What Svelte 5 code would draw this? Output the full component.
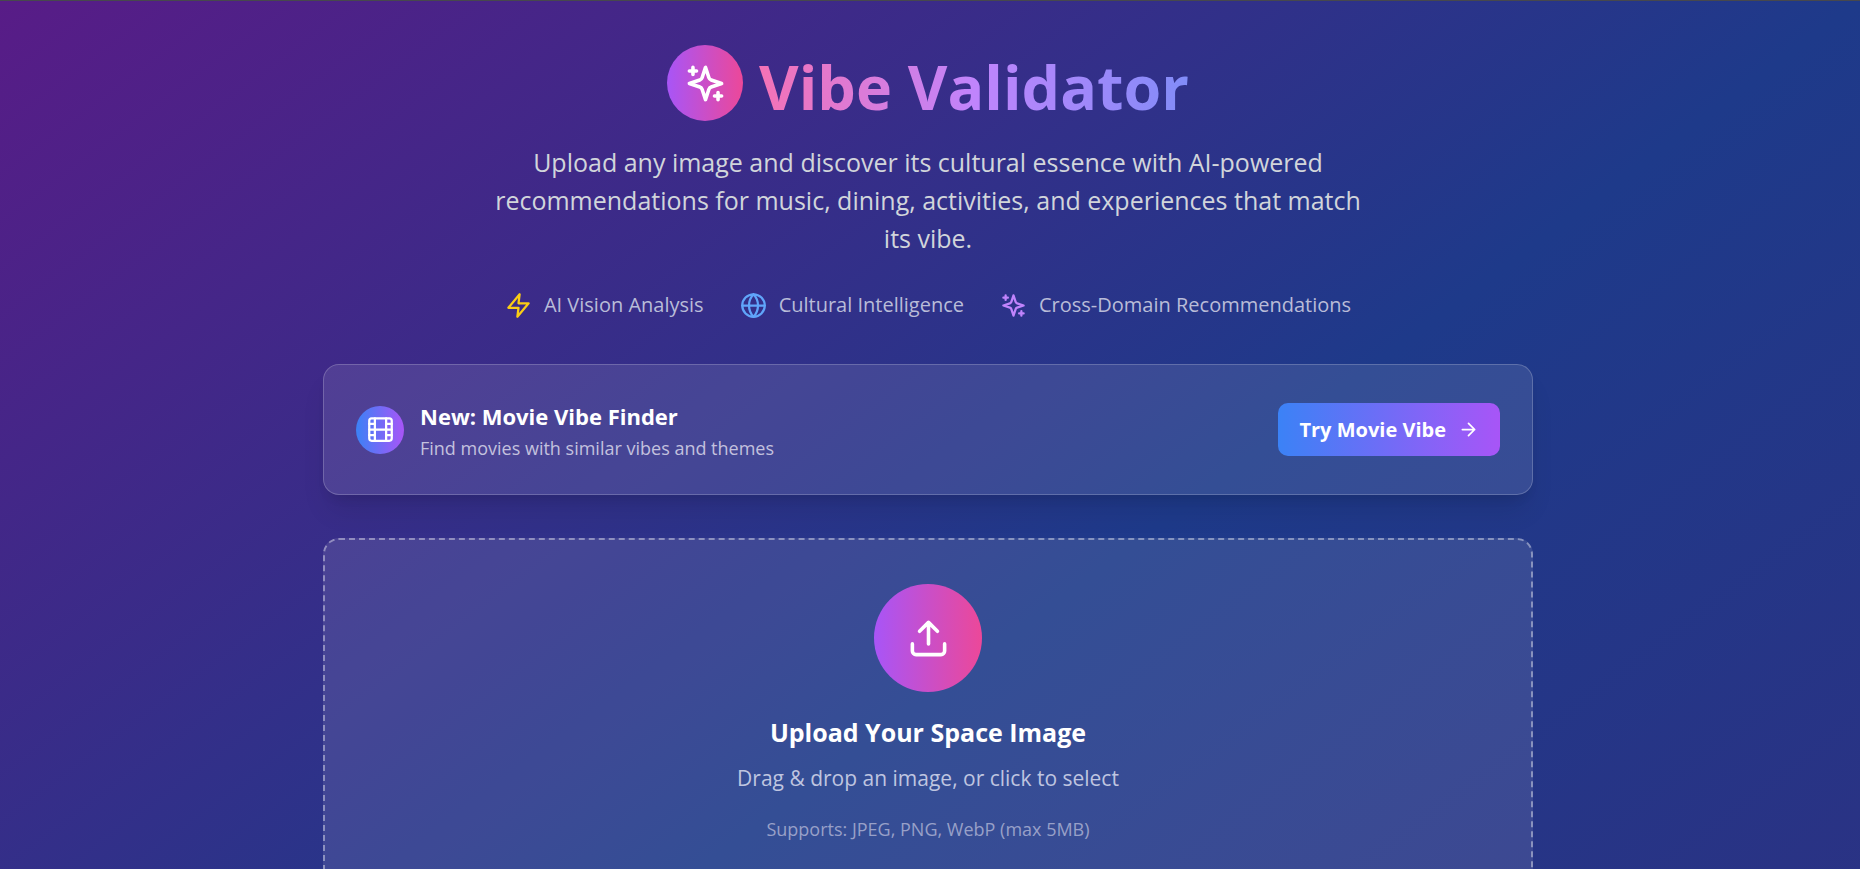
<script lang="ts">
	const features = [
		{ icon: 'zap', label: 'AI Vision Analysis' },
		{ icon: 'globe', label: 'Cultural Intelligence' },
		{ icon: 'sparkles', label: 'Cross-Domain Recommendations' }
	];

	let fileInput: HTMLInputElement;
</script>

{#snippet icon(name: string)}
	<svg class="icon {name}" viewBox="0 0 24 24" aria-hidden="true">
		{#if name === 'sparkles'}
			<path d="m12 3-1.912 5.813a2 2 0 0 1-1.275 1.275L3 12l5.813 1.912a2 2 0 0 1 1.275 1.275L12 21l1.912-5.813a2 2 0 0 1 1.275-1.275L21 12l-5.813-1.912a2 2 0 0 1-1.275-1.275L12 3Z" />
			<path d="M5 3v4M19 17v4M3 5h4M17 19h4" />
		{:else if name === 'zap'}
			<path d="M13 2 3 14h9l-1 8 10-12h-9l1-8z" />
		{:else if name === 'globe'}
			<circle cx="12" cy="12" r="10" />
			<path d="M12 2a14.5 14.5 0 0 0 0 20 14.5 14.5 0 0 0 0-20M2 12h20" />
		{:else if name === 'film'}
			<rect width="20" height="20" x="2" y="2" rx="2.18" />
			<path d="M7 2v20M17 2v20M2 12h20M2 7h5M2 17h5M17 17h5M17 7h5" />
		{:else if name === 'arrow'}
			<path d="M5 12h14M12 5l7 7-7 7" />
		{:else if name === 'upload'}
			<path d="M21 15v4a2 2 0 0 1-2 2H5a2 2 0 0 1-2-2v-4M17 8l-5-5-5 5M12 3v12" />
		{/if}
	</svg>
{/snippet}

<div class="page">
	<main>
		<header>
			<div class="brand">
				<span class="logo">{@render icon('sparkles')}</span>
				<h1>Vibe Validator</h1>
			</div>
			<p class="intro">
				Upload any image and discover its cultural essence with AI-powered recommendations for
				music, dining, activities, and experiences that match its vibe.
			</p>
			<ul class="features">
				{#each features as feature}
					<li>{@render icon(feature.icon)}{feature.label}</li>
				{/each}
			</ul>
		</header>

		<section class="card promo">
			<span class="badge">{@render icon('film')}</span>
			<div class="promo-text">
				<h2>New: Movie Vibe Finder</h2>
				<p>Find movies with similar vibes and themes</p>
			</div>
			<button class="try">Try Movie Vibe {@render icon('arrow')}</button>
		</section>

		<button class="card dropzone" on:click={() => fileInput.click()}>
			<span class="upload-circle">{@render icon('upload')}</span>
			<span class="drop-title">Upload Your Space Image</span>
			<span class="drop-text">Drag &amp; drop an image, or click to select</span>
			<span class="drop-note">Supports: JPEG, PNG, WebP (max 5MB)</span>
		</button>
		<input bind:this={fileInput} type="file" accept="image/jpeg,image/png,image/webp" aria-label="Image" hidden />
	</main>
</div>

<style>
	:global(body) {
		margin: 0;
	}

	.page {
		height: 100vh;
		overflow: hidden;
		box-sizing: border-box;
		border-top: 1px solid #47484d;
		padding: 38px 32px 0;
		background: linear-gradient(to bottom right, #581c87, #1e3a8a, #312e81) 0 0 / 100% 160vh no-repeat;
		color: #fff;
		font-family: "Segoe UI", "Open Sans", "Noto Sans", sans-serif;
	}

	main {
		max-width: 1210px;
		margin: 0 auto;
		padding-right: 4px;
	}

	h1, h2, p, ul {
		margin: 0;
		padding: 0;
	}

	.icon {
		display: block;
		flex: none;
		width: 27px;
		height: 27px;
		fill: none;
		stroke: currentColor;
		stroke-width: 2;
		stroke-linecap: round;
		stroke-linejoin: round;
	}

	header {
		display: flex;
		flex-direction: column;
		align-items: center;
		text-align: center;
	}

	.brand {
		display: flex;
		align-items: center;
		gap: 16px;
	}

	.logo, .badge, .upload-circle {
		display: flex;
		align-items: center;
		justify-content: center;
		border-radius: 50%;
		background: linear-gradient(to right, #a855f7, #ec4899);
	}

	.logo {
		width: 76px;
		height: 76px;
	}

	.logo .icon {
		width: 43px;
		height: 43px;
	}

	h1 {
		padding-top: 8px;
		font-size: 61px;
		line-height: 80px;
		font-weight: 700;
		color: transparent;
		background: linear-gradient(to right, #f472b6, #c084fc, #818cf8);
		background-clip: text;
	}

	.intro {
		max-width: 880px;
		margin-top: 16px;
		font-size: 25px;
		line-height: 38px;
		color: #d1d5db;
	}

	.features {
		display: flex;
		gap: 36px;
		margin-top: 32px;
		list-style: none;
		font-size: 20px;
		line-height: 32px;
		color: #b9bcd8;
	}

	.features li {
		display: flex;
		align-items: center;
		gap: 12px;
	}

	.zap {
		color: #facc15;
	}

	.globe {
		color: #60a5fa;
	}

	.features .sparkles {
		color: #c084fc;
	}

	.card {
		box-sizing: border-box;
		width: 100%;
		border-radius: 16px;
		background: rgba(255, 255, 255, 0.1);
	}

	.promo {
		display: flex;
		align-items: center;
		margin-top: 43px;
		padding: 32px;
		border: 1px solid rgba(255, 255, 255, 0.2);
		box-shadow: 0 20px 28px -6px rgba(0, 0, 0, 0.1), 0 8px 12px -6px rgba(0, 0, 0, 0.1);
	}

	.badge {
		width: 48px;
		height: 48px;
		background: linear-gradient(to right, #3b82f6, #a855f7);
	}

	.promo-text {
		flex: 1;
		margin-left: 16px;
	}

	h2 {
		font-size: 22px;
		line-height: 38px;
		font-weight: 700;
	}

	.promo-text p {
		font-size: 18px;
		line-height: 27px;
		color: #c3c1de;
	}

	.try {
		display: flex;
		align-items: center;
		gap: 12px;
		padding: 10px 21px;
		border: 0;
		border-radius: 10px;
		background: linear-gradient(to right, #3b82f6, #a855f7);
		color: #fff;
		font: 700 20px/33px "Segoe UI", "Open Sans", "Noto Sans", sans-serif;
		cursor: pointer;
	}

	.arrow {
		width: 21px;
		height: 21px;
	}

	.dropzone {
		display: flex;
		flex-direction: column;
		align-items: center;
		margin-top: 43px;
		padding: 44px 44px 64px;
		border: 2px dashed rgba(255, 255, 255, 0.4);
		color: #fff;
		font-family: inherit;
		cursor: pointer;
	}

	.upload-circle {
		width: 108px;
		height: 108px;
	}

	.upload {
		width: 43px;
		height: 43px;
	}

	.drop-title {
		margin-top: 21px;
		font-size: 25px;
		line-height: 38px;
		font-weight: 700;
	}

	.drop-text {
		margin-top: 11px;
		font-size: 21px;
		line-height: 32px;
		color: #bfc5e0;
	}

	.drop-note {
		margin-top: 22px;
		font-size: 18px;
		line-height: 27px;
		color: #98a0c8;
	}
</style>
